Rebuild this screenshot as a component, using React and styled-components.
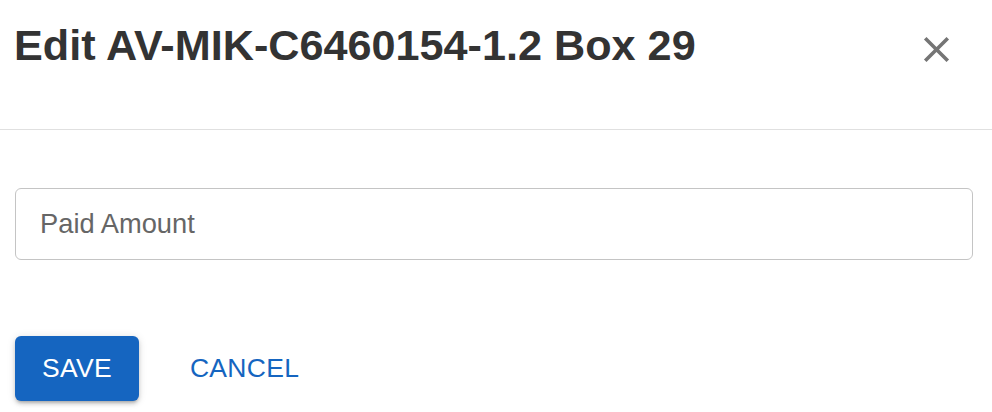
import React from 'react';
import styled, { createGlobalStyle } from 'styled-components';

const GlobalStyle = createGlobalStyle`
  html, body {
    margin: 0;
    padding: 0;
    background: #ffffff;
  }
  body {
    font-family: "Liberation Sans", Arial, sans-serif;
  }
`;

function CloseIcon() {
  return (
    <svg width="43" height="43" viewBox="0 0 24 24" fill="currentColor">
      <path d="M19 6.41 17.59 5 12 10.59 6.41 5 5 6.41 10.59 12 5 17.59 6.41 19 12 13.41 17.59 19 19 17.59 13.41 12z" />
    </svg>
  );
}

function App() {
  return (
    <>
      <GlobalStyle />
      <Dialog>
        <Header>
          <Title>Edit AV-MIK-C6460154-1.2 Box 29</Title>
          <CloseButton aria-label="close">
            <CloseIcon />
          </CloseButton>
        </Header>
        <Content>
          <Field type="text" placeholder="Paid Amount" />
        </Content>
        <Actions>
          <Button variant="contained">Save</Button>
          <Button>Cancel</Button>
        </Actions>
      </Dialog>
    </>
  );
}

const Dialog = styled.div`
  display: flex;
  flex-direction: column;
  width: 992px;
  height: 412px;
  box-sizing: border-box;
`;

const Header = styled.div`
  display: flex;
  justify-content: space-between;
  align-items: flex-start;
  height: 130px;
  box-sizing: border-box;
  padding: 21px 19px 0 14px;
  border-bottom: 1px solid #e0e0e0;
`;

const Title = styled.h2`
  margin: 0;
  font-family: "Liberation Sans", Arial, sans-serif;
  font-weight: 700;
  font-size: 43.2px;
  line-height: 48px;
  color: #333333;
`;

const CloseButton = styled.button`
  display: flex;
  align-items: center;
  justify-content: center;
  padding: 0;
  margin: 7px 15px 0 0;
  border: none;
  background: transparent;
  color: #757575;
  cursor: pointer;
`;

const Content = styled.div`
  padding: 58px 19px 0 15px;
`;

const Field = styled.input`
  display: block;
  width: 100%;
  height: 72px;
  box-sizing: border-box;
  padding: 0 24px;
  border: 1px solid #c4c4c4;
  border-radius: 6px;
  font-family: "Liberation Sans", Arial, sans-serif;
  font-size: 27.3px;
  color: #333333;
  outline: none;

  &::placeholder {
    color: #666666;
  }
`;

const Actions = styled.div`
  display: flex;
  align-items: center;
  gap: 24px;
  padding: 76px 19px 0 15px;
`;

const Button = styled.button`
  height: 65px;
  padding: 0 27px;
  border: none;
  border-radius: 6px;
  font-family: "Liberation Sans", Arial, sans-serif;
  font-size: 26.5px;
  letter-spacing: 0.3px;
  text-transform: uppercase;
  cursor: pointer;
  background: ${(p) => (p.variant === 'contained' ? '#1565c0' : 'transparent')};
  color: ${(p) => (p.variant === 'contained' ? '#ffffff' : '#1565c0')};
  box-shadow: ${(p) =>
    p.variant === 'contained'
      ? '0 3px 3px -2px rgba(0,0,0,0.2), 0 3px 4px 0 rgba(0,0,0,0.14), 0 1px 8px 0 rgba(0,0,0,0.12)'
      : 'none'};
`;

export default App;
